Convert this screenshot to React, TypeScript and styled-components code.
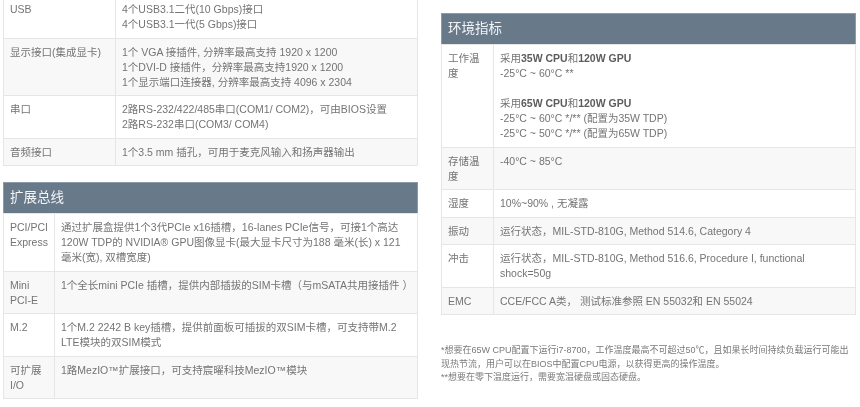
import styled, { createGlobalStyle } from 'styled-components';
import { ReactElement, ReactNode } from 'react';

const GlobalStyle = createGlobalStyle`
  html, body {
    margin: 0;
    padding: 0;
    background: #fff;
    overflow: hidden;
  }
`;

const Page = styled.div`
  width: 860px;
  height: 407px;
  overflow: hidden;
  display: grid;
  grid-template-columns: 415px 415px;
  column-gap: 23px;
  padding-left: 3px;
  box-sizing: border-box;
  align-items: start;
  font-family: 'Liberation Sans', 'Noto Sans CJK SC', sans-serif;
  font-size: 10.5px;
  line-height: 15px;
  color: #747474;
  filter: blur(0.45px);
`;

const LeftColumn = styled.div`
  margin-top: -5px;
`;

const RightColumn = styled.div`
  padding-top: 13px;
`;

const SpecTable = styled.table<{ $labelWidth: number }>`
  width: 100%;
  table-layout: fixed;
  border-collapse: collapse;
  border: 1px solid #e6e6e6;

  & + h3 {
    margin-top: 16px;
  }

  col:first-child {
    width: ${({ $labelWidth }) => $labelWidth}px;
  }
`;

const Row = styled.tr`
  background: #fff;

  &:nth-child(even) {
    background: #f8f8f8;
  }
`;

const Cell = styled.td`
  padding: 6px 6px 5.5px;
  border: 1px solid #e6e6e6;
  vertical-align: top;
`;

const Heading = styled.h3`
  margin: 0;
  height: 31px;
  padding-left: 6px;
  background: #68798a;
  border: 1px solid #8d9aa7;
  border-bottom: 0;
  box-sizing: border-box;
  font-weight: 400;
  font-size: 13.5px;
  line-height: 29px;
  color: #f2f4f6;
`;

const Line = styled.div`
  min-height: 15px;
  white-space: nowrap;
`;

const Strong = styled.strong`
  font-weight: 700;
  color: #5c5c5c;
`;

const Notes = styled.div`
  margin-top: 29px;
  font-size: 9px;
  line-height: 13.7px;
  color: #7a7a7a;
`;

type Spec = { label: string[]; lines: ReactNode[] };

const ports: Spec[] = [
  { label: ['USB'], lines: ['4个USB3.1二代(10 Gbps)接口', '4个USB3.1一代(5 Gbps)接口'] },
  {
    label: ['显示接口(集成显卡)'],
    lines: [
      '1个 VGA 接插件, 分辨率最高支持 1920 x 1200',
      '1个DVI-D 接插件，分辨率最高支持1920 x 1200',
      '1个显示端口连接器, 分辨率最高支持 4096 x 2304',
    ],
  },
  {
    label: ['串口'],
    lines: ['2路RS-232/422/485串口(COM1/ COM2)，可由BIOS设置', '2路RS-232串口(COM3/ COM4)'],
  },
  { label: ['音频接口'], lines: ['1个3.5 mm 插孔，可用于麦克风输入和扬声器输出'] },
];

const bus: Spec[] = [
  {
    label: ['PCI/PCI', 'Express'],
    lines: [
      '通过扩展盒提供1个3代PCIe x16插槽，16-lanes PCIe信号，可接1个高达',
      '120W TDP的 NVIDIA® GPU图像显卡(最大显卡尺寸为188 毫米(长) x 121',
      '毫米(宽), 双槽宽度)',
    ],
  },
  { label: ['Mini', 'PCI-E'], lines: ['1个全长mini PCIe 插槽，提供内部插拔的SIM卡槽（与mSATA共用接插件 ）'] },
  {
    label: ['M.2'],
    lines: ['1个M.2 2242 B key插槽，提供前面板可插拔的双SIM卡槽，可支持带M.2', 'LTE模块的双SIM模式'],
  },
  { label: ['可扩展', 'I/O'], lines: ['1路MezIO™扩展接口，可支持宸曜科技MezIO™模块'] },
];

const environment: Spec[] = [
  {
    label: ['工作温', '度'],
    lines: [
      <>采用<Strong>35W CPU</Strong>和<Strong>120W GPU</Strong></>,
      '-25°C ~ 60°C **',
      '',
      <>采用<Strong>65W CPU</Strong>和<Strong>120W GPU</Strong></>,
      '-25°C ~ 60°C */** (配置为35W TDP)',
      '-25°C ~ 50°C */** (配置为65W TDP)',
    ],
  },
  { label: ['存储温', '度'], lines: ['-40°C ~ 85°C'] },
  { label: ['湿度'], lines: ['10%~90% , 无凝露'] },
  { label: ['振动'], lines: ['运行状态，MIL-STD-810G, Method 514.6, Category 4'] },
  {
    label: ['冲击'],
    lines: ['运行状态，MIL-STD-810G, Method 516.6, Procedure I, functional', 'shock=50g'],
  },
  { label: ['EMC'], lines: ['CCE/FCC A类， 测试标准参照 EN 55032和 EN 55024'] },
];

const Specs = ({ rows, labelWidth }: { rows: Spec[]; labelWidth: number }): ReactElement => (
  <SpecTable $labelWidth={labelWidth}>
    <colgroup>
      <col />
      <col />
    </colgroup>
    <tbody>
      {rows.map((row) => (
        <Row key={row.label[0]}>
          <Cell>
            {row.label.map((line) => (
              <Line key={line}>{line}</Line>
            ))}
          </Cell>
          <Cell>
            {row.lines.map((line, i) => (
              <Line key={i}>{line}</Line>
            ))}
          </Cell>
        </Row>
      ))}
    </tbody>
  </SpecTable>
);

export default function App(): ReactElement {
  return (
    <>
      <GlobalStyle />
      <Page>
        <LeftColumn>
          <Specs rows={ports} labelWidth={112} />
          <Heading>扩展总线</Heading>
          <Specs rows={bus} labelWidth={51} />
        </LeftColumn>
        <RightColumn>
          <Heading>环境指标</Heading>
          <Specs rows={environment} labelWidth={52} />
          <Notes>
            <div>*想要在65W CPU配置下运行i7-8700，工作温度最高不可超过50℃，且如果长时间持续负载运行可能出现热节流，用户可以在BIOS中配置CPU电源，以获得更高的操作温度。</div>
            <div>**想要在零下温度运行，需要宽温硬盘或固态硬盘。</div>
          </Notes>
        </RightColumn>
      </Page>
    </>
  );
}
